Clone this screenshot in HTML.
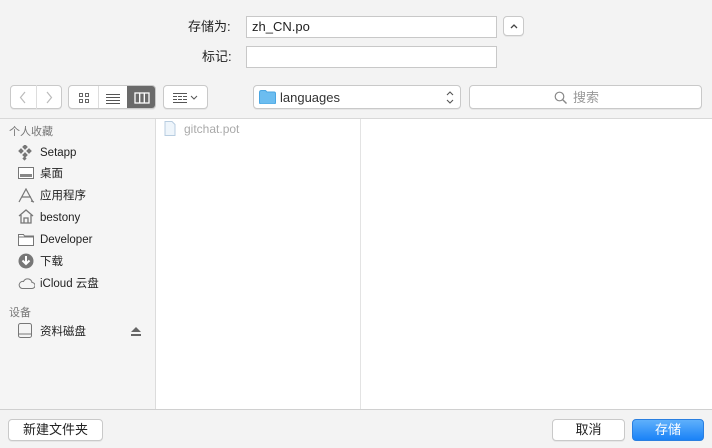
<!DOCTYPE html>
<html><head><meta charset="utf-8"><style>
*{box-sizing:border-box;margin:0;padding:0}
body{width:712px;height:448px;background:#f3f3f3;font-family:"Liberation Sans","Noto Sans CJK SC",sans-serif;font-size:12px;color:#222;position:relative;overflow:hidden;line-height:16px}
.a{position:absolute}
.inp{background:#fff;border:1px solid #c8c8c8;height:22px;font-size:13px;padding:2px 5px}
.btn{background:#fff;border:1px solid #c9c9c9;border-radius:4px;box-shadow:0 1px 0 rgba(0,0,0,.05)}
.side{left:0;top:119px;width:156px;height:290px;background:#f5f5f5;border-right:1px solid #dcdcdc}
.it{position:absolute;left:40px;font-size:11.5px;color:#222;line-height:14px}
.ic{position:absolute;left:18px}
.hd{position:absolute;left:9px;font-size:11px;color:#777;line-height:13px}
</style></head><body>
<div class="a" style="left:188px;top:19px;font-size:13px">存储为:</div>
<div class="a inp" style="left:246px;top:16px;width:251px">zh_CN.po</div>
<div class="a btn" style="left:503px;top:16px;width:21px;height:20px"><svg class="a" style="left:6px;top:6px" width="8" height="6"><path d="M1 5l3-3 3 3" fill="none" stroke="#444" stroke-width="1.3"/></svg></div>
<div class="a" style="left:202px;top:49px;font-size:13px">标记:</div>
<div class="a inp" style="left:246px;top:46px;width:251px"></div>

<div class="a btn" style="left:10px;top:85px;width:52px;height:24px"></div>
<div class="a" style="left:36px;top:85px;width:1px;height:24px;background:#ddd"></div>
<svg class="a" style="left:19px;top:91px" width="8" height="13"><path d="M6 1L1.5 6.5 6 12" fill="none" stroke="#bbb" stroke-width="1.2"/></svg>
<svg class="a" style="left:45px;top:91px" width="8" height="13"><path d="M2 1l4.5 5.5L2 12" fill="none" stroke="#bbb" stroke-width="1.2"/></svg>

<div class="a btn" style="left:68px;top:85px;width:88px;height:24px;overflow:hidden">
<div class="a" style="left:29px;top:0;width:1px;height:24px;background:#ddd"></div>
<div class="a" style="left:58px;top:-1px;width:30px;height:24px;background:#6a6a6a"></div>
<svg class="a" style="left:9px;top:6px" width="12" height="12"><g fill="none" stroke="#666"><rect x="1.5" y="1.5" width="3" height="3"/><rect x="7.5" y="1.5" width="3" height="3"/><rect x="1.5" y="7.5" width="3" height="3"/><rect x="7.5" y="7.5" width="3" height="3"/></g></svg>
<svg class="a" style="left:36px;top:6px" width="16" height="12"><g stroke="#555"><path d="M1 2.5h14M1 5.5h14M1 8.5h14M1 11.5h14"/></g></svg>
<svg class="a" style="left:65px;top:6px" width="16" height="12"><g fill="none" stroke="#fff" stroke-width="1.3"><rect x="1" y="1" width="14" height="10"/><path d="M5.7 1v10M10.3 1v10"/></g></svg>
</div>

<div class="a btn" style="left:163px;top:85px;width:45px;height:24px">
<svg class="a" style="left:8px;top:6px" width="30" height="12"><g fill="none" stroke="#555"><path d="M1 1.5h14M1 4.5h4M6 4.5h4M11 4.5h4M1 7.5h4M6 7.5h4M11 7.5h4M1 10.5h14"/><path d="M19 4l3 3 3-3"/></g></svg>
</div>

<div class="a btn" style="left:253px;top:85px;width:208px;height:24px">
<svg class="a" style="left:5px;top:4px" width="17" height="14"><path d="M0.5 2.5q0-2 2-2h4l1.5 1.5h7q1.5 0 1.5 1.5v9q0 1.5-1.5 1.5h-13q-1.5 0-1.5-1.5z" fill="#6cbdf0" stroke="#4aa6e2"/></svg>
<div class="a" style="left:26px;top:4px;font-size:13px;color:#333">languages</div>
<svg class="a" style="left:192px;top:4px" width="8" height="15"><path d="M1 5l3-3 3 3M1 10l3 3 3-3" fill="none" stroke="#555" stroke-width="1.1"/></svg>
</div>

<div class="a btn" style="left:469px;top:85px;width:233px;height:24px;color:#999;font-size:13px">
<svg class="a" style="left:84px;top:5px" width="14" height="14"><circle cx="5.5" cy="5.5" r="4.3" fill="none" stroke="#888" stroke-width="1.2"/><path d="M8.5 8.5l4 4" stroke="#888" stroke-width="1.4"/></svg>
<div class="a" style="left:103px;top:4px">搜索</div>
</div>

<div class="a" style="left:0;top:118px;width:712px;height:1px;background:#d8d8d8"></div>
<div class="a side"></div>
<div class="a" style="left:156px;top:119px;width:556px;height:290px;background:#fff"></div>
<div class="a" style="left:360px;top:119px;width:1px;height:290px;background:#e3e3e3"></div>
<div class="a" style="left:0;top:409px;width:712px;height:1px;background:#d0d0d0"></div>

<svg class="a" style="left:164px;top:121px" width="12" height="15"><path d="M1 .5h7l3 3v11H1z" fill="#eef5fb" stroke="#b8cde0"/></svg>
<div class="a" style="left:184px;top:121px;color:#aaa;font-size:12px">gitchat.pot</div>

<div class="hd" style="top:126px">个人收藏</div>
<svg class="ic" style="top:145px" width="14" height="16"><g fill="#777"><rect x="5" y="0" width="4" height="4" transform="rotate(45 7 2)"/><rect x="1" y="4" width="4" height="4" transform="rotate(45 3 6)"/><rect x="9" y="4" width="4" height="4" transform="rotate(45 11 6)"/><rect x="5" y="8" width="4" height="4" transform="rotate(45 7 10)"/><rect x="5" y="12" width="3" height="3" transform="rotate(45 6.5 13.5)"/></g></svg>
<div class="it" style="top:146px">Setapp</div>
<svg class="ic" style="top:167px" width="16" height="13"><rect x=".5" y=".5" width="15" height="11" fill="#fff" stroke="#777"/><rect x="2" y="7" width="12" height="3" fill="#888"/></svg>
<div class="it" style="top:167px">桌面</div>
<svg class="ic" style="top:188px" width="17" height="15"><path d="M1 14L8 1l7 13M4 9h9M13 13l3 1" fill="none" stroke="#777" stroke-width="1.2"/></svg>
<div class="it" style="top:189px">应用程序</div>
<svg class="ic" style="top:209px" width="16" height="15"><path d="M1 7L8 1l7 6M3 6v8h10V6M6 14V9h4v5" fill="none" stroke="#777" stroke-width="1.3"/></svg>
<div class="it" style="top:211px">bestony</div>
<svg class="ic" style="top:233px" width="16" height="13"><path d="M.5 1.5h5l1 1.5h9v9.5H.5z" fill="#fff" stroke="#777"/><path d="M.5 4h15" stroke="#777"/></svg>
<div class="it" style="top:233px">Developer</div>
<svg class="ic" style="top:253px" width="16" height="16"><circle cx="8" cy="8" r="7.5" fill="#777"/><path d="M8 3v7M4.5 7.5L8 11l3.5-3.5" fill="none" stroke="#fff" stroke-width="2"/></svg>
<div class="it" style="top:255px">下载</div>
<svg class="ic" style="top:277px" width="17" height="12"><path d="M4 11.5h10a3 3 0 0 0 0-6 4.5 4.5 0 0 0-8.5-1A3.5 3.5 0 0 0 4 11.5z" fill="none" stroke="#777"/></svg>
<div class="it" style="top:277px">iCloud 云盘</div>
<div class="hd" style="top:307px">设备</div>
<svg class="ic" style="top:323px" width="15" height="16"><rect x=".5" y=".5" width="13" height="14" rx="2" fill="#f4f4f4" stroke="#777"/><path d="M1 11h12" stroke="#777"/></svg>
<div class="it" style="top:325px">资料磁盘</div>
<svg class="a" style="left:131px;top:327px" width="10" height="9"><path d="M5 0l5 5H0z M0 7h10v2H0z" fill="#666"/></svg>

<div class="a btn" style="left:8px;top:419px;width:95px;height:22px;text-align:center;line-height:20px;font-size:13px">新建文件夹</div>
<div class="a btn" style="left:552px;top:419px;width:73px;height:22px;text-align:center;line-height:20px;font-size:13px">取消</div>
<div class="a" style="left:632px;top:419px;width:72px;height:22px;border-radius:4px;background:linear-gradient(#5fb0fb,#1a82f7);border:1px solid #2a7fe0;color:#fff;text-align:center;line-height:20px;font-size:13px">存储</div>
</body></html>
